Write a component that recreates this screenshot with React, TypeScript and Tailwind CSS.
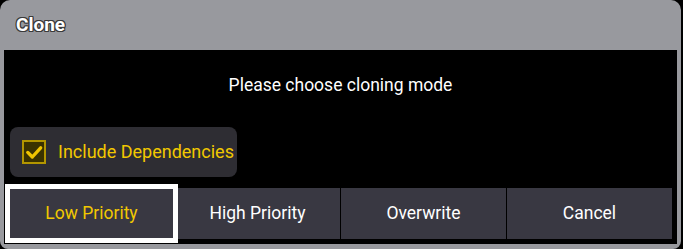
export default function App() {
  return (
    <div className="w-[683px] h-[249px] bg-black font-['Roboto',_'Liberation_Sans',_sans-serif]">
      <div className="w-[681px] h-[249px] bg-[#98999e] rounded-t-[10px] rounded-b-[8px] flex flex-col px-[4px] pb-[5px]">
        <div className="h-[50px] flex items-center pl-[12px] pb-[2px]">
          <span className="text-[19px] font-bold text-white leading-none [text-shadow:_-1px_-1px_0_#3a3a3a,_1px_-1px_0_#3a3a3a,_-1px_1px_0_#3a3a3a,_1px_1px_0_#3a3a3a,_0_1px_0_#3a3a3a,_0_-1px_0_#3a3a3a,_1px_0_0_#3a3a3a,_-1px_0_0_#3a3a3a]">
            Clone
          </span>
        </div>
        <div className="flex-1 bg-black flex flex-col pt-[25px]">
          <div className="h-[20px] leading-[20px] text-center text-white text-[17.5px]">
            Please choose cloning mode
          </div>
          <div className="mt-[32px] ml-[6px] w-[227px] h-[50px] rounded-[8px] bg-[#2e2d33] flex items-center pl-[12px] gap-[12px]">
            <div className="w-[24px] h-[24px] border-[2px] border-[#b39600] bg-[#3a3200] flex items-center justify-center">
              <svg width="20" height="20" viewBox="0 0 24 24" fill="none">
                <path d="M4.5 12.5 L10 18 L20 7" stroke="#f0c400" strokeWidth="4" strokeLinecap="round" strokeLinejoin="round" />
              </svg>
            </div>
            <span className="text-[18px] text-[#f2c800] leading-none whitespace-nowrap">Include Dependencies</span>
          </div>
          <div className="mt-[11px] mx-[5px] grid grid-cols-4 gap-px h-[51px]">
            <div className="bg-[#393842] flex items-center justify-center text-[17.5px] text-[#f2c800] outline outline-[5px] outline-white outline-offset-[-1px] relative z-10">
              Low Priority
            </div>
            <div className="bg-[#393842] flex items-center justify-center text-[17.5px] text-white">
              High Priority
            </div>
            <div className="bg-[#393842] flex items-center justify-center text-[17.5px] text-white">
              Overwrite
            </div>
            <div className="bg-[#393842] flex items-center justify-center text-[17.5px] text-white">
              Cancel
            </div>
          </div>
        </div>
      </div>
    </div>
  );
}
